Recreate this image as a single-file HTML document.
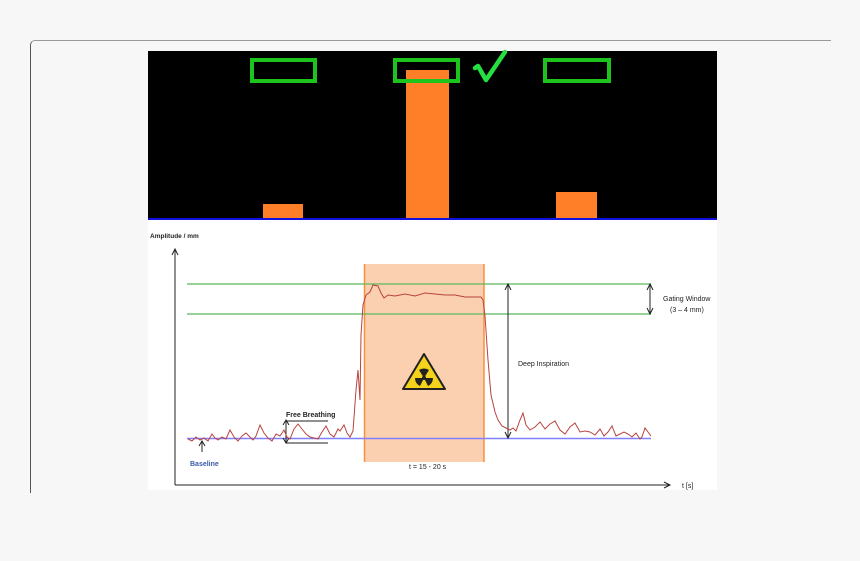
<!DOCTYPE html>
<html><head><style>
html,body{margin:0;padding:0;background:#f7f7f7;width:860px;height:561px;overflow:hidden}
.card{position:absolute;left:30px;top:40px;width:800px;height:452px;border-left:1px solid #555;border-top:1px solid #999;border-top-left-radius:5px}
svg{position:absolute;left:0;top:0}
text{font-family:"Liberation Sans",sans-serif;font-size:7px;font-weight:bold;fill:#222}
</style></head><body>
<div class="card"></div>
<svg width="860" height="561" viewBox="0 0 860 561">
<rect x="148" y="51" width="569" height="168" fill="#000"/>
<rect x="148" y="218" width="569" height="2" fill="#1010e0"/>
<rect x="148" y="220" width="569" height="270" fill="#fff"/>
<rect x="263" y="204" width="40" height="14" fill="#fe7f27"/>
<rect x="406" y="70" width="43" height="148" fill="#fe7f27"/>
<rect x="556" y="192" width="41" height="26" fill="#fe7f27"/>
<g fill="none" stroke="#1dc41d" stroke-width="4">
<rect x="252" y="60" width="63" height="21"/>
<rect x="395" y="60" width="63" height="21"/>
<rect x="545" y="60" width="64" height="21"/>
</g>
<path d="M475 68 L478 66 L486 80 L505 52" fill="none" stroke="#25e040" stroke-width="4.5" stroke-linecap="round" stroke-linejoin="round"/>
<rect x="364" y="264" width="120" height="198" fill="#fbd0b0"/>
<line x1="364.5" y1="264" x2="364.5" y2="462" stroke="#f7913f" stroke-width="1.5"/>
<line x1="484" y1="264" x2="484" y2="462" stroke="#f7913f" stroke-width="1.5"/>
<line x1="187" y1="284" x2="651" y2="284" stroke="#5cb85c" stroke-width="1.2"/>
<line x1="187" y1="314" x2="651" y2="314" stroke="#5cb85c" stroke-width="1.2"/>
<line x1="187" y1="438.5" x2="651" y2="438.5" stroke="#8080ff" stroke-width="1.5"/>
<g stroke="#222" stroke-width="1" fill="none">
<line x1="175" y1="250" x2="175" y2="485"/><path d="M172 255 L175 249 L178 255"/>
<line x1="175" y1="485" x2="670" y2="485"/><path d="M664 482 L670 485 L664 488"/>
<line x1="508" y1="285" x2="508" y2="437"/><path d="M505 290 L508 284 L511 290 M505 432 L508 438 L511 432"/>
<line x1="650" y1="285" x2="650" y2="313"/><path d="M647 290 L650 284 L653 290 M647 308 L650 314 L653 308"/>
<line x1="286" y1="421" x2="286" y2="442"/><path d="M283 425 L286 420 L289 425 M283 438 L286 443 L289 438"/>
<line x1="286" y1="421" x2="328" y2="421"/><line x1="286" y1="443" x2="328" y2="443"/>
<line x1="202" y1="442" x2="202" y2="452"/><path d="M199 446 L202 441 L205 446"/>
</g>
<polyline fill="none" stroke="#b8433f" stroke-width="1" points="188,439 192,441 196,437 200,440 204,438 208,441 212,434 215,438 218,440 222,437 226,439 230,430 234,437 238,441 242,436 246,433 250,437 253,440 256,436 260,425 264,433 268,438 272,441 276,434 280,436 284,430 287,437 290,439 294,429 298,424 302,429 306,434 310,437 314,438 318,439 322,432 326,426 330,434 334,437 338,429 340,431 344,425 347,433 350,437 353,431 356,390 358,370 360,400 361,335 363,305 366,295 370,292 373,285 378,286 381,293 384,298 388,295 395,296 405,294 415,296 425,293 435,294 445,295 455,295 465,297 475,297 481,297 483,300 485,316 488,360 491,395 495,412 498,420 502,426 506,428 510,430 513,428 516,431 520,420 523,413 526,425 530,430 535,427 540,422 545,429 550,424 555,421 560,430 565,434 570,427 575,423 580,432 585,431 590,432 595,435 600,429 604,436 608,432 612,426 616,436 620,434 624,432 628,434 632,437 636,433 640,439 642,437 645,428 648,432 651,436"/>
<path d="M424 354 L445 389 L403 389 Z" fill="#f5d21b" stroke="#222" stroke-width="2" stroke-linejoin="round"/>
<circle cx="424" cy="378" r="2" fill="#222"/>
<path d="M424 378 L419 370 A9 9 0 0 1 429 370 Z M424 378 L433 378 A9 9 0 0 1 428 386 Z M424 378 L420 386 A9 9 0 0 1 415 378 Z" fill="#222"/>
<text x="150" y="238" style="font-size:6.5px">Amplitude / mm</text>
<text x="286" y="417">Free Breathing</text>
<text x="190" y="466" style="fill:#3a5aa8">Baseline</text>
<text x="518" y="366" style="font-weight:normal">Deep Inspiration</text>
<text x="663" y="301" style="font-weight:normal">Gating Window</text>
<text x="670" y="312" style="font-weight:normal">(3 – 4 mm)</text>
<text x="409" y="469" style="font-weight:normal">t = 15 - 20 s</text>
<text x="682" y="488" style="font-weight:normal">t [s]</text>
</svg>
</body></html>
